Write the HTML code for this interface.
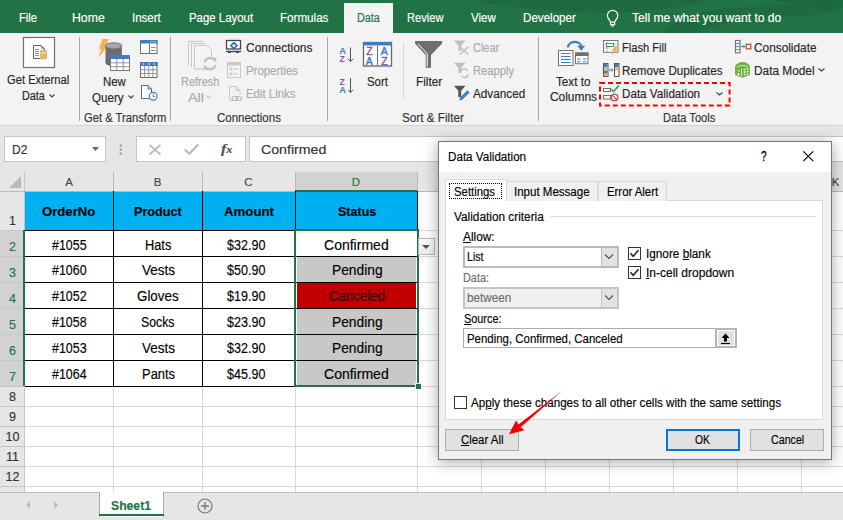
<!DOCTYPE html><html><head><meta charset="utf-8"><style>html,body{margin:0;padding:0;width:843px;height:520px;overflow:hidden;position:relative;background:#f3f3f3;font-family:"Liberation Sans",sans-serif}u{text-decoration:underline;text-underline-offset:1px}div[id^=t]{-webkit-text-stroke:0.15px currentColor}</style></head><body>
<div style="position:absolute;left:0px;top:0px;width:843px;height:33px;background:#217346"></div>
<svg style="position:absolute;left:0;top:0" width="843" height="33"><path d="M470 0 C520 9 575 15 630 12 C660 10 690 5 710 0 Z" fill="#1f6a40"/><path d="M660 33 C675 20 700 9 740 7 C780 5 810 3 843 0 V33 Z" fill="#1f6b41"/><path d="M700 33 C715 24 745 18 790 17 C815 16 830 12 843 8 V33 Z" fill="#217346"/><path d="M775 0 C800 6 825 7 843 5 V0 Z" fill="#1e6840"/></svg>
<div style="position:absolute;left:344px;top:3px;width:49px;height:30px;background:#f3f3f3"></div>
<div id="t0" style="position:absolute;left:19px;top:11.80px;font-family:'Liberation Sans',sans-serif;font-size:12px;line-height:1;font-weight:400;color:#ffffff;white-space:nowrap;transform:scaleX(0.9305);transform-origin:0 0;">File</div>
<div id="t1" style="position:absolute;left:72.4px;top:11.80px;font-family:'Liberation Sans',sans-serif;font-size:12px;line-height:1;font-weight:400;color:#ffffff;white-space:nowrap;transform:scaleX(1.0214);transform-origin:0 0;">Home</div>
<div id="t2" style="position:absolute;left:132.1px;top:11.80px;font-family:'Liberation Sans',sans-serif;font-size:12px;line-height:1;font-weight:400;color:#ffffff;white-space:nowrap;transform:scaleX(0.9595);transform-origin:0 0;">Insert</div>
<div id="t3" style="position:absolute;left:188.5px;top:11.80px;font-family:'Liberation Sans',sans-serif;font-size:12px;line-height:1;font-weight:400;color:#ffffff;white-space:nowrap;transform:scaleX(0.9512);transform-origin:0 0;">Page Layout</div>
<div id="t4" style="position:absolute;left:280.3px;top:11.80px;font-family:'Liberation Sans',sans-serif;font-size:12px;line-height:1;font-weight:400;color:#ffffff;white-space:nowrap;transform:scaleX(0.9677);transform-origin:0 0;">Formulas</div>
<div id="t5" style="position:absolute;left:407.2px;top:11.80px;font-family:'Liberation Sans',sans-serif;font-size:12px;line-height:1;font-weight:400;color:#ffffff;white-space:nowrap;transform:scaleX(0.9299);transform-origin:0 0;">Review</div>
<div id="t6" style="position:absolute;left:471px;top:11.80px;font-family:'Liberation Sans',sans-serif;font-size:12px;line-height:1;font-weight:400;color:#ffffff;white-space:nowrap;transform:scaleX(0.9652);transform-origin:0 0;">View</div>
<div id="t7" style="position:absolute;left:523.2px;top:11.80px;font-family:'Liberation Sans',sans-serif;font-size:12px;line-height:1;font-weight:400;color:#ffffff;white-space:nowrap;transform:scaleX(0.9670);transform-origin:0 0;">Developer</div>
<div id="t8" style="position:absolute;left:632.3px;top:11.80px;font-family:'Liberation Sans',sans-serif;font-size:12px;line-height:1;font-weight:400;color:#ffffff;white-space:nowrap;transform:scaleX(1.0083);transform-origin:0 0;">Tell me what you want to do</div>
<div id="t9" style="position:absolute;left:356.6px;top:11.80px;font-family:'Liberation Sans',sans-serif;font-size:12px;line-height:1;font-weight:400;color:#217346;white-space:nowrap;transform:scaleX(0.8991);transform-origin:0 0;">Data</div>
<svg style="position:absolute;left:605px;top:9px;" width="16" height="19" viewBox="0 0 16 19"><path d="M7.6 1.3 C4.6 1.3 2.4 3.6 2.4 6.4 C2.4 8.8 3.9 10 4.9 11.8 L5.4 13.2 H9.8 L10.3 11.8 C11.3 10 12.8 8.8 12.8 6.4 C12.8 3.6 10.6 1.3 7.6 1.3 Z" fill="none" stroke="#fff" stroke-width="1.2"/><path d="M5.6 13.2 V15.6 H9.6 V13.2" fill="none" stroke="#fff" stroke-width="1.1"/><path d="M6.2 17 H9" stroke="#fff" stroke-width="1.1"/></svg>
<div style="position:absolute;left:0px;top:33px;width:843px;height:92px;background:#f3f3f3"></div>
<div style="position:absolute;left:0px;top:125px;width:843px;height:1px;background:#d5d5d5"></div>
<div style="position:absolute;left:79px;top:37px;width:1px;height:84px;background:#a9a9a9"></div>
<div style="position:absolute;left:170px;top:37px;width:1px;height:84px;background:#a9a9a9"></div>
<div style="position:absolute;left:327px;top:37px;width:1px;height:84px;background:#a9a9a9"></div>
<div style="position:absolute;left:538px;top:37px;width:1px;height:84px;background:#a9a9a9"></div>
<div style="position:absolute;left:403px;top:43px;width:1px;height:55px;background:#d6d6d6"></div>
<svg style="position:absolute;left:0;top:0" width="843" height="126"><rect x="23.5" y="37.5" width="31" height="30" fill="#fff" stroke="#6f6f6f" stroke-width="1.2"/>
<!-- Get External Data -->
<path d="M33.5 45.5 H41 L44.5 49 V58.5 H33.5 Z" fill="#fff" stroke="#5f5f5f"/>
<path d="M41.5 45.8 V48.6 H44.3 Z" fill="#5f5f5f"/>
<path d="M35 49.5 H39 M35 51.5 H39 M35 53.5 H39 M35 55.5 H39" stroke="#8a8a8a"/>
<path d="M40 51 V58.2 C40 60 47 60 47 58.2 V51 Z" fill="#e6b56a"/>
<ellipse cx="43.5" cy="51" rx="3.5" ry="1.3" fill="#e6b56a"/>
<path d="M40.3 52.3 C41 53.4 46 53.4 46.7 52.3" stroke="#fff" stroke-width="0.8" fill="none"/>
<!-- New Query -->
<path d="M102.5 39 H109 L105.5 46 H107.8 L98 58.3 L101.3 49 H98.8 Z" fill="#efb453"/>
<path d="M105.5 46 V63 C105.5 67 121.9 67 121.9 63 V46 Z" fill="#6d6d6d"/>
<ellipse cx="113.7" cy="45.8" rx="8.2" ry="3.1" fill="#a8a8a8" stroke="#6d6d6d" stroke-width="0.8"/>
<rect x="110.5" y="55.5" width="19" height="15" fill="#fff" stroke="#777"/>
<rect x="110" y="55" width="20" height="4" fill="#3f7cc0"/>
<path d="M116.8 59 V70.5 M123.2 59 V70.5 M110.5 62.8 H129.5 M110.5 66.7 H129.5" stroke="#8a8a8a" stroke-width="0.9"/>
<rect x="140.5" y="40.5" width="16.5" height="13" fill="#fff" stroke="#6d6d6d"/>
<rect x="140" y="40" width="17.5" height="3.5" fill="#3f7cc0"/>
<path d="M150.5 41.8 H151.5 M152.8 41.8 H153.8 M155 41.8 H156" stroke="#fff" stroke-width="1"/>
<path d="M149.5 43.5 V53.5" stroke="#6d6d6d"/>
<path d="M151 47.5 H155.5 M151 50.5 H155.5" stroke="#888"/>
<rect x="140.5" y="62.5" width="16.5" height="15" fill="#fff" stroke="#6d6d6d"/>
<rect x="140" y="62" width="17.5" height="4" fill="#3f7cc0"/>
<path d="M142.5 64 H144 M147.8 64 H149.8 M153.5 64 H155" stroke="#fff" stroke-width="1"/>
<path d="M144.7 66 V77.5 M148.8 66 V77.5 M152.9 66 V77.5 M140.5 69.8 H157 M140.5 73.6 H157" stroke="#8a8a8a" stroke-width="0.9"/>
<path d="M141.5 85.5 H148 L151.5 89 V98.5 H141.5 Z" fill="#fff" stroke="#666"/>
<path d="M148 85.5 V89 H151.5" fill="none" stroke="#666"/>
<circle cx="153.2" cy="96.2" r="3.9" fill="#fff" stroke="#3d7ec7" stroke-width="1.2"/>
<path d="M153.2 93.8 V96.6 H155.3" fill="none" stroke="#3d7ec7" stroke-width="1"/>
<!-- Refresh All -->
<path d="M188.5 65 V41.5 H203" fill="none" stroke="#c8c8c8"/>
<path d="M191.5 67 V43.5 H205.5" fill="none" stroke="#c8c8c8"/>
<path d="M194.5 45.5 H207 L211.5 50 V69 H194.5 Z" fill="#f5f2f5" stroke="#c8c8c8"/>
<circle cx="210" cy="63.6" r="7.5" fill="#f3f3f3"/>
<path d="M204.6 62.3 A5.6 5.6 0 0 1 214.6 60.2" fill="none" stroke="#c2c2c2" stroke-width="2.3"/>
<path d="M212 57.5 L216.8 58 L215.5 62.5 Z" fill="#c2c2c2"/>
<path d="M215.4 65 A5.6 5.6 0 0 1 205.4 67" fill="none" stroke="#c2c2c2" stroke-width="2.3"/>
<path d="M208 69.8 L203.2 69.3 L204.5 64.8 Z" fill="#c2c2c2"/>
<!-- Connections -->
<rect x="226.5" y="40.5" width="14" height="8.5" fill="#fff" stroke="#444" stroke-width="1.3"/>
<path d="M225.8 51.5 H241.2" stroke="#444" stroke-width="1.3"/>
<path d="M228 52.5 H231 M236 52.5 H239" stroke="#444" stroke-width="1"/>
<path d="M233.9 42.6 L236.9 45.6 L233.9 48.6 L230.9 45.6 Z" fill="#fff" stroke="#2f6fbf" stroke-width="1.7"/>
<!-- Properties -->
<rect x="227.5" y="62.5" width="13" height="15" fill="#f5f2f5" stroke="#c8c8c8"/>
<rect x="227.5" y="62.5" width="13" height="3" fill="#c8c8c8"/>
<circle cx="231" cy="69" r="1.1" fill="none" stroke="#c2c2c2"/>
<circle cx="231" cy="74" r="1.1" fill="none" stroke="#c2c2c2"/>
<path d="M233.5 69 H238 M233.5 74 H238" stroke="#c2c2c2"/>
<!-- Edit Links -->
<path d="M229.5 86.5 H236 L240 90.5 V95 M233 100.5 H229.5 V86.5" fill="#f5f2f5" stroke="#c8c8c8"/>
<path d="M236 86.5 V90.5 H240" fill="none" stroke="#c8c8c8"/>
<rect x="232" y="96.5" width="5.5" height="4" rx="2" fill="none" stroke="#bdbdbd" stroke-width="1.2"/>
<rect x="236" y="96.5" width="5.5" height="4" rx="2" fill="none" stroke="#bdbdbd" stroke-width="1.2"/>
<!-- AZ ZA -->
<text x="339.3" y="53.9" font-family="Liberation Sans" font-size="9.3" font-weight="bold" fill="#3d7ec7">A</text>
<text x="339.6" y="61.9" font-family="Liberation Sans" font-size="8.6" font-weight="bold" fill="#8f4fc0">Z</text>
<path d="M350.5 47.5 V61.3 M348 58.8 L350.5 61.5 L353 58.8" fill="none" stroke="#555" stroke-width="1"/>
<text x="339.6" y="84.7" font-family="Liberation Sans" font-size="8.6" font-weight="bold" fill="#8f4fc0">Z</text>
<text x="339.3" y="93.3" font-family="Liberation Sans" font-size="9.3" font-weight="bold" fill="#3d7ec7">A</text>
<path d="M350.5 78 V92.3 M348 89.8 L350.5 92.5 L353 89.8" fill="none" stroke="#555" stroke-width="1"/>
<!-- Sort -->
<rect x="363.5" y="42.5" width="28" height="23.5" fill="#fff" stroke="#666" stroke-width="1.3"/>
<rect x="363" y="42" width="29" height="3.5" fill="#3f7cc0"/>
<path d="M377.5 45.5 V66" stroke="#6d6d6d"/>
<text x="366.2" y="54.6" font-family="Liberation Sans" font-size="10.5" fill="#8f4fc0" stroke="#8f4fc0" stroke-width="0.45">Z</text>
<text x="365.8" y="65" font-family="Liberation Sans" font-size="10.5" fill="#3d7ec7" stroke="#3d7ec7" stroke-width="0.45">A</text>
<text x="380.8" y="54.6" font-family="Liberation Sans" font-size="10.5" fill="#3d7ec7" stroke="#3d7ec7" stroke-width="0.45">A</text>
<text x="381.2" y="65" font-family="Liberation Sans" font-size="10.5" fill="#8f4fc0" stroke="#8f4fc0" stroke-width="0.45">Z</text>
<!-- Filter -->
<path d="M415 41 H442.1 V43.6 L431 55 V67.8 H425.7 V55 L415 43.6 Z" fill="#6e6e6e"/>
<path d="M418 43.8 L427.2 53.8 V66.5" fill="none" stroke="#fff" stroke-width="1"/>
<path d="M454 40.5 H465.5 L461.2 45.5 V50.8 H458.3 V45.5 Z" fill="#bfbfbf"/>
<path d="M459.8 46.8 L468.3 54.5 M468.3 46.8 L459.8 54.5" stroke="#bdbdbd" stroke-width="1.3"/>
<path d="M454 62.8 H465.5 L461.2 67.8 V73 H458.3 V67.8 Z" fill="#bfbfbf"/>
<path d="M460.7 72 A3.8 3.8 0 0 1 467.8 71 M468.3 74.3 A3.8 3.8 0 0 1 461.2 75.5" fill="none" stroke="#bdbdbd" stroke-width="1.3"/>
<path d="M454 85.7 H465.5 L461.2 90.7 V97 H458.3 V90.7 Z" fill="#555"/>
<path d="M459.2 100.8 L460.3 97.2 L467.3 90.2 L469.6 92.5 L462.6 99.5 Z" fill="#3d7ec7"/>
<!-- Text to Columns -->
<rect x="558.5" y="50.5" width="14.5" height="15" fill="#fff" stroke="#707070"/>
<path d="M561 53.5 H570.5 M561 56.5 H570.5 M561 59.5 H570.5 M561 62.5 H570.5" stroke="#3d7ec7"/>
<rect x="575.5" y="53" width="12.5" height="10.7" fill="#fff" stroke="#707070"/>
<rect x="575" y="52.5" width="13.5" height="3.5" fill="#707070"/>
<path d="M577 59 H580.5 M583 59 H586.5 M577 61.8 H580.5 M583 61.8 H586.5" stroke="#3d7ec7"/>
<path d="M568 47.5 C568.5 40.5 580 40 581.2 46.5" fill="none" stroke="#3d7ec7" stroke-width="2.2"/>
<path d="M577.3 45.8 L581.3 50.8 L585.2 45.8 Z" fill="#3d7ec7"/>
<!-- Flash Fill -->
<rect x="603.5" y="40.5" width="14.5" height="11.8" fill="#fff" stroke="#777"/>
<path d="M603.5 44 H618 M603.5 48 H610 M607 40.5 V52.3" stroke="#aaa" stroke-width="0.8"/>
<rect x="606.5" y="43.5" width="7" height="3" fill="#fff" stroke="#3a9a8a"/>
<path d="M614.8 46 L611.5 51 H613.8 L611.5 55.8 L618.8 49.3 H616.2 L618.5 46 Z" fill="#efb453"/>
<!-- Remove Duplicates -->
<rect x="603.5" y="63.5" width="4.5" height="13" fill="#fff" stroke="#555"/>
<rect x="604" y="64" width="3.5" height="3" fill="#3d7ec7"/>
<rect x="604" y="67.3" width="3.5" height="3" fill="#efb453"/>
<rect x="604" y="70.6" width="3.5" height="3" fill="#3d7ec7"/>
<rect x="604" y="73.6" width="3.5" height="2.6" fill="#efb453"/>
<rect x="614.5" y="63.5" width="4.5" height="13" fill="#fff" stroke="#555"/>
<rect x="615" y="64" width="3.5" height="3" fill="#3d7ec7"/>
<rect x="615" y="67.3" width="3.5" height="3" fill="#efb453"/>
<path d="M609 70 H612.8 M611.3 68.5 L612.8 70 L611.3 71.5" fill="none" stroke="#3d7ec7"/>
<!-- Data Validation -->
<rect x="603.5" y="88.5" width="7" height="3" fill="#fff" stroke="#707070"/>
<rect x="603.5" y="95.5" width="7" height="3.5" fill="#fff" stroke="#707070"/>
<path d="M611.3 89.3 L613.6 91.6 L618.8 85.5" fill="none" stroke="#2a9d6a" stroke-width="1.6"/>
<circle cx="614.5" cy="97.4" r="3.3" fill="#fff" stroke="#d04a3a" stroke-width="1.3"/>
<path d="M612.2 95.1 L616.8 99.7" stroke="#d04a3a" stroke-width="1.3"/>
<!-- Consolidate -->
<rect x="735.5" y="40.5" width="4.5" height="12.3" fill="#fff" stroke="#777" stroke-width="1.2"/>
<path d="M735.5 43.6 H740 M735.5 46.6 H740 M735.5 49.7 H740" stroke="#777"/>
<path d="M741 46.6 H744.8 M743.3 45 L744.9 46.6 L743.3 48.2" fill="none" stroke="#3d7ec7"/>
<rect x="746.3" y="44.3" width="4.5" height="4.5" fill="#fff" stroke="#d04a3a" stroke-width="1.3"/>
<!-- Data Model -->
<path d="M735 67 C735.5 63.5 740 62 742.5 62 C745 62 749.5 63.5 749.9 67 V75 L742.5 77.8 L735 75 Z" fill="#6ab43e"/>
<path d="M737 67.2 C739 65 746 65 748 67.2" stroke="#e9f5e0" stroke-width="0.9" fill="none"/>
<path d="M741.5 68.5 V76.5" stroke="#e9f5e0" stroke-width="0.9"/>
<path d="M743.8 69.5 H745.5 M746.8 69 H748.3 M743.8 72 H745.5 M746.8 71.7 H748.3 M743.8 74.5 H745.5 M746.8 74.2 H748.3" stroke="#fff" stroke-width="1.3"/>
<path d="M737.5 70 L739.5 71.5 M738.5 73 V75.5 M737.3 74.2 H739.7" stroke="#fff" stroke-width="1"/>
</svg>
<div id="t10" style="position:absolute;left:83.7px;top:111.80px;font-family:'Liberation Sans',sans-serif;font-size:12px;line-height:1;font-weight:400;color:#333;white-space:nowrap;transform:scaleX(0.9349);transform-origin:0 0;">Get &amp; Transform</div>
<div id="t11" style="position:absolute;left:216.5px;top:111.80px;font-family:'Liberation Sans',sans-serif;font-size:12px;line-height:1;font-weight:400;color:#333;white-space:nowrap;transform:scaleX(0.9578);transform-origin:0 0;">Connections</div>
<div id="t12" style="position:absolute;left:402px;top:111.80px;font-family:'Liberation Sans',sans-serif;font-size:12px;line-height:1;font-weight:400;color:#333;white-space:nowrap;transform:scaleX(0.9770);transform-origin:0 0;">Sort &amp; Filter</div>
<div id="t13" style="position:absolute;left:663px;top:111.80px;font-family:'Liberation Sans',sans-serif;font-size:12px;line-height:1;font-weight:400;color:#333;white-space:nowrap;transform:scaleX(0.9259);transform-origin:0 0;">Data Tools</div>
<div id="t14" style="position:absolute;left:7.4px;top:73.80px;font-family:'Liberation Sans',sans-serif;font-size:12px;line-height:1;font-weight:400;color:#262626;white-space:nowrap;transform:scaleX(0.9325);transform-origin:0 0;">Get External</div>
<div id="t15" style="position:absolute;left:21.5px;top:89.50px;font-family:'Liberation Sans',sans-serif;font-size:12px;line-height:1;font-weight:400;color:#262626;white-space:nowrap;transform:scaleX(0.9030);transform-origin:0 0;">Data</div>
<svg style="position:absolute;left:49px;top:94px;" width="6" height="4" viewBox="0 0 6 4"><path d="M0.5 0.5 L3 3 L5.5 0.5" fill="none" stroke="#444" stroke-width="1.2"/></svg>
<div id="t16" style="position:absolute;left:102.9px;top:75.60px;font-family:'Liberation Sans',sans-serif;font-size:12px;line-height:1;font-weight:400;color:#262626;white-space:nowrap;transform:scaleX(0.9494);transform-origin:0 0;">New</div>
<div id="t17" style="position:absolute;left:92.4px;top:91.50px;font-family:'Liberation Sans',sans-serif;font-size:12px;line-height:1;font-weight:400;color:#262626;white-space:nowrap;transform:scaleX(0.9667);transform-origin:0 0;">Query</div>
<svg style="position:absolute;left:128px;top:95px;" width="6" height="4" viewBox="0 0 6 4"><path d="M0.5 0.5 L3 3 L5.5 0.5" fill="none" stroke="#444" stroke-width="1.2"/></svg>
<div id="t18" style="position:absolute;left:181.4px;top:75.80px;font-family:'Liberation Sans',sans-serif;font-size:12px;line-height:1;font-weight:400;color:#a9a9a9;white-space:nowrap;transform:scaleX(0.9112);transform-origin:0 0;">Refresh</div>
<div id="t19" style="position:absolute;left:188px;top:91.50px;font-family:'Liberation Sans',sans-serif;font-size:12px;line-height:1;font-weight:400;color:#a9a9a9;white-space:nowrap;transform:scaleX(1.1991);transform-origin:0 0;">All</div>
<svg style="position:absolute;left:206px;top:95px;" width="6" height="4" viewBox="0 0 6 4"><path d="M0.5 0.5 L3 3 L5.5 0.5" fill="none" stroke="#b4b4b4" stroke-width="1"/></svg>
<div id="t20" style="position:absolute;left:245.5px;top:42.00px;font-family:'Liberation Sans',sans-serif;font-size:12px;line-height:1;font-weight:400;color:#262626;white-space:nowrap;transform:scaleX(0.9967);transform-origin:0 0;">Connections</div>
<div id="t21" style="position:absolute;left:245.5px;top:65.00px;font-family:'Liberation Sans',sans-serif;font-size:12px;line-height:1;font-weight:400;color:#a9a9a9;white-space:nowrap;transform:scaleX(0.9506);transform-origin:0 0;">Properties</div>
<div id="t22" style="position:absolute;left:245.5px;top:87.80px;font-family:'Liberation Sans',sans-serif;font-size:12px;line-height:1;font-weight:400;color:#a9a9a9;white-space:nowrap;transform:scaleX(0.9494);transform-origin:0 0;">Edit Links</div>
<div id="t23" style="position:absolute;left:366.8px;top:75.90px;font-family:'Liberation Sans',sans-serif;font-size:12px;line-height:1;font-weight:400;color:#262626;white-space:nowrap;transform:scaleX(0.9493);transform-origin:0 0;">Sort</div>
<div id="t24" style="position:absolute;left:415.9px;top:75.90px;font-family:'Liberation Sans',sans-serif;font-size:12px;line-height:1;font-weight:400;color:#262626;white-space:nowrap;transform:scaleX(0.9786);transform-origin:0 0;">Filter</div>
<div id="t25" style="position:absolute;left:472.5px;top:42.00px;font-family:'Liberation Sans',sans-serif;font-size:12px;line-height:1;font-weight:400;color:#a9a9a9;white-space:nowrap;transform:scaleX(0.9098);transform-origin:0 0;">Clear</div>
<div id="t26" style="position:absolute;left:472.5px;top:65.00px;font-family:'Liberation Sans',sans-serif;font-size:12px;line-height:1;font-weight:400;color:#a9a9a9;white-space:nowrap;transform:scaleX(0.9312);transform-origin:0 0;">Reapply</div>
<div id="t27" style="position:absolute;left:472.5px;top:87.80px;font-family:'Liberation Sans',sans-serif;font-size:12px;line-height:1;font-weight:400;color:#262626;white-space:nowrap;transform:scaleX(0.9780);transform-origin:0 0;">Advanced</div>
<div id="t28" style="position:absolute;left:556.4px;top:75.55px;font-family:'Liberation Sans',sans-serif;font-size:12px;line-height:1;font-weight:400;color:#262626;white-space:nowrap;transform:scaleX(0.9729);transform-origin:0 0;">Text to</div>
<div id="t29" style="position:absolute;left:549.7px;top:91.00px;font-family:'Liberation Sans',sans-serif;font-size:12px;line-height:1;font-weight:400;color:#262626;white-space:nowrap;transform:scaleX(0.9924);transform-origin:0 0;">Columns</div>
<div id="t30" style="position:absolute;left:622.3px;top:42.00px;font-family:'Liberation Sans',sans-serif;font-size:12px;line-height:1;font-weight:400;color:#262626;white-space:nowrap;transform:scaleX(0.9247);transform-origin:0 0;">Flash Fill</div>
<div id="t31" style="position:absolute;left:622.3px;top:65.00px;font-family:'Liberation Sans',sans-serif;font-size:12px;line-height:1;font-weight:400;color:#262626;white-space:nowrap;transform:scaleX(0.9669);transform-origin:0 0;">Remove Duplicates</div>
<div id="t32" style="position:absolute;left:622.3px;top:87.80px;font-family:'Liberation Sans',sans-serif;font-size:12px;line-height:1;font-weight:400;color:#262626;white-space:nowrap;transform:scaleX(0.9702);transform-origin:0 0;">Data Validation</div>
<svg style="position:absolute;left:716px;top:92px;" width="7" height="4" viewBox="0 0 7 4"><path d="M0.5 0.5 L3.5 3 L6.5 0.5" fill="none" stroke="#444" stroke-width="1.2"/></svg>
<svg style="position:absolute;left:598px;top:82px" width="135" height="26"><rect x="2" y="1" width="129.6" height="22.6" fill="none" stroke="#fa0000" stroke-width="2" stroke-dasharray="5 3"/></svg>
<div id="t33" style="position:absolute;left:754.4px;top:42.00px;font-family:'Liberation Sans',sans-serif;font-size:12px;line-height:1;font-weight:400;color:#262626;white-space:nowrap;transform:scaleX(0.9862);transform-origin:0 0;">Consolidate</div>
<div id="t34" style="position:absolute;left:754.4px;top:65.00px;font-family:'Liberation Sans',sans-serif;font-size:12px;line-height:1;font-weight:400;color:#262626;white-space:nowrap;transform:scaleX(0.9874);transform-origin:0 0;">Data Model</div>
<svg style="position:absolute;left:818px;top:68px;" width="7" height="4" viewBox="0 0 7 4"><path d="M0.5 0.5 L3.5 3 L6.5 0.5" fill="none" stroke="#444" stroke-width="1.2"/></svg>
<div style="position:absolute;left:0px;top:126px;width:843px;height:46px;background:#e6e6e6"></div>
<div style="position:absolute;left:4px;top:136px;width:102px;height:26px;background:#fff;border:1px solid #c6c6c6;box-sizing:border-box"></div>
<div id="t35" style="position:absolute;left:11.5px;top:143.88px;font-family:'Liberation Sans',sans-serif;font-size:12.5px;line-height:1;font-weight:400;color:#333;white-space:nowrap;transform:scaleX(0.9634);transform-origin:0 0;">D2</div>
<svg style="position:absolute;left:92px;top:147px;" width="8" height="5" viewBox="0 0 8 5"><path d="M0 0 H7 L3.5 4 Z" fill="#666"/></svg>
<svg style="position:absolute;left:119px;top:144px;" width="4" height="12" viewBox="0 0 4 12"><rect x="0.7" y="0.5" width="2.2" height="2.2" fill="#a0a0a0"/><rect x="0.7" y="4.5" width="2.2" height="2.2" fill="#a0a0a0"/><rect x="0.7" y="8.5" width="2.2" height="2.2" fill="#a0a0a0"/></svg>
<div style="position:absolute;left:136px;top:136px;width:110px;height:26px;background:#fff;border:1px solid #c6c6c6;box-sizing:border-box"></div>
<svg style="position:absolute;left:148px;top:143px;" width="14" height="13" viewBox="0 0 14 13"><path d="M1.5 1.8 L12.5 11.5 M12.5 1.8 L1.5 11.5" stroke="#b8b8b8" stroke-width="1.7"/></svg>
<svg style="position:absolute;left:183px;top:143px;" width="17" height="13" viewBox="0 0 17 13"><path d="M1.8 6.5 L6.3 10.8 L15.3 1.5" fill="none" stroke="#b8b8b8" stroke-width="2"/></svg>
<div id="t36" style="position:absolute;left:221.4px;top:141.95px;font-family:'Liberation Serif',sans-serif;font-size:13px;line-height:1;font-weight:700;color:#505050;white-space:nowrap;transform:scaleX(1.2201);transform-origin:0 0;"><i>f</i><span style="font-size:10px"><i>x</i></span></div>
<div style="position:absolute;left:249px;top:136px;width:610px;height:26px;background:#fff;border:1px solid #c6c6c6;box-sizing:border-box"></div>
<div id="t37" style="position:absolute;left:261.1px;top:143.88px;font-family:'Liberation Sans',sans-serif;font-size:12.5px;line-height:1;font-weight:400;color:#333;white-space:nowrap;transform:scaleX(1.1323);transform-origin:0 0;">Confirmed</div>
<div style="position:absolute;left:25px;top:191px;width:818px;height:301px;background:#fff"></div>
<div style="position:absolute;left:0px;top:172px;width:25px;height:320px;background:#e6e6e6"></div>
<div style="position:absolute;left:0px;top:230px;width:24px;height:156px;background:#d2d2d2"></div>
<div style="position:absolute;left:25px;top:172px;width:818px;height:19px;background:#e6e6e6"></div>
<div style="position:absolute;left:295px;top:172px;width:122px;height:19px;background:#d2d2d2"></div>
<div style="position:absolute;left:113px;top:172px;width:1px;height:19px;background:#b9b9b9"></div>
<div style="position:absolute;left:202px;top:172px;width:1px;height:19px;background:#b9b9b9"></div>
<div style="position:absolute;left:295px;top:172px;width:1px;height:19px;background:#b9b9b9"></div>
<div style="position:absolute;left:417px;top:172px;width:1px;height:19px;background:#b9b9b9"></div>
<div style="position:absolute;left:481px;top:172px;width:1px;height:19px;background:#b9b9b9"></div>
<div style="position:absolute;left:545px;top:172px;width:1px;height:19px;background:#b9b9b9"></div>
<div style="position:absolute;left:609px;top:172px;width:1px;height:19px;background:#b9b9b9"></div>
<div style="position:absolute;left:673px;top:172px;width:1px;height:19px;background:#b9b9b9"></div>
<div style="position:absolute;left:737px;top:172px;width:1px;height:19px;background:#b9b9b9"></div>
<div style="position:absolute;left:801px;top:172px;width:1px;height:19px;background:#b9b9b9"></div>
<div style="position:absolute;left:24px;top:172px;width:1px;height:320px;background:#c6c6c6"></div>
<div style="position:absolute;left:0px;top:191px;width:843px;height:1px;background:#b9b9b9"></div>
<div style="position:absolute;left:295px;top:190px;width:122px;height:2px;background:#217346"></div>
<div style="position:absolute;left:0px;top:230px;width:24px;height:1px;background:#c6c6c6"></div>
<div style="position:absolute;left:0px;top:256px;width:24px;height:1px;background:#c6c6c6"></div>
<div style="position:absolute;left:0px;top:282px;width:24px;height:1px;background:#c6c6c6"></div>
<div style="position:absolute;left:0px;top:308px;width:24px;height:1px;background:#c6c6c6"></div>
<div style="position:absolute;left:0px;top:334px;width:24px;height:1px;background:#c6c6c6"></div>
<div style="position:absolute;left:0px;top:360px;width:24px;height:1px;background:#c6c6c6"></div>
<div style="position:absolute;left:0px;top:386px;width:24px;height:1px;background:#c6c6c6"></div>
<div style="position:absolute;left:0px;top:406px;width:24px;height:1px;background:#c6c6c6"></div>
<div style="position:absolute;left:0px;top:426px;width:24px;height:1px;background:#c6c6c6"></div>
<div style="position:absolute;left:0px;top:446px;width:24px;height:1px;background:#c6c6c6"></div>
<div style="position:absolute;left:0px;top:466px;width:24px;height:1px;background:#c6c6c6"></div>
<div style="position:absolute;left:0px;top:486px;width:24px;height:1px;background:#c6c6c6"></div>
<div style="position:absolute;left:23px;top:230px;width:2px;height:156px;background:#217346"></div>
<svg style="position:absolute;left:9px;top:176px;" width="13" height="13" viewBox="0 0 13 13"><path d="M12 0 V12 H0 Z" fill="#b9b9b9"/></svg>
<div style="position:absolute;left:417px;top:191px;width:1px;height:301px;background:#d9d9d9"></div>
<div style="position:absolute;left:481px;top:191px;width:1px;height:301px;background:#d9d9d9"></div>
<div style="position:absolute;left:545px;top:191px;width:1px;height:301px;background:#d9d9d9"></div>
<div style="position:absolute;left:609px;top:191px;width:1px;height:301px;background:#d9d9d9"></div>
<div style="position:absolute;left:673px;top:191px;width:1px;height:301px;background:#d9d9d9"></div>
<div style="position:absolute;left:737px;top:191px;width:1px;height:301px;background:#d9d9d9"></div>
<div style="position:absolute;left:801px;top:191px;width:1px;height:301px;background:#d9d9d9"></div>
<div style="position:absolute;left:113px;top:386px;width:1px;height:106px;background:#d9d9d9"></div>
<div style="position:absolute;left:202px;top:386px;width:1px;height:106px;background:#d9d9d9"></div>
<div style="position:absolute;left:295px;top:386px;width:1px;height:106px;background:#d9d9d9"></div>
<div style="position:absolute;left:25px;top:386px;width:818px;height:1px;background:#d9d9d9"></div>
<div style="position:absolute;left:25px;top:406px;width:818px;height:1px;background:#d9d9d9"></div>
<div style="position:absolute;left:25px;top:426px;width:818px;height:1px;background:#d9d9d9"></div>
<div style="position:absolute;left:25px;top:446px;width:818px;height:1px;background:#d9d9d9"></div>
<div style="position:absolute;left:25px;top:466px;width:818px;height:1px;background:#d9d9d9"></div>
<div style="position:absolute;left:25px;top:486px;width:818px;height:1px;background:#d9d9d9"></div>
<div style="position:absolute;left:417px;top:230px;width:426px;height:1px;background:#d9d9d9"></div>
<div style="position:absolute;left:417px;top:256px;width:426px;height:1px;background:#d9d9d9"></div>
<div style="position:absolute;left:417px;top:282px;width:426px;height:1px;background:#d9d9d9"></div>
<div style="position:absolute;left:417px;top:308px;width:426px;height:1px;background:#d9d9d9"></div>
<div style="position:absolute;left:417px;top:334px;width:426px;height:1px;background:#d9d9d9"></div>
<div style="position:absolute;left:417px;top:360px;width:426px;height:1px;background:#d9d9d9"></div>
<div style="position:absolute;left:25px;top:192px;width:392px;height:38px;background:#00b0f0"></div>
<div style="position:absolute;left:297px;top:257px;width:119px;height:25px;background:#c8c8c8"></div>
<div style="position:absolute;left:297px;top:283px;width:119px;height:25px;background:#c00000"></div>
<div style="position:absolute;left:297px;top:309px;width:119px;height:25px;background:#c8c8c8"></div>
<div style="position:absolute;left:297px;top:335px;width:119px;height:25px;background:#c8c8c8"></div>
<div style="position:absolute;left:297px;top:361px;width:119px;height:25px;background:#c8c8c8"></div>
<div style="position:absolute;left:113px;top:191px;width:1px;height:195px;background:#000"></div>
<div style="position:absolute;left:202px;top:191px;width:1px;height:195px;background:#000"></div>
<div style="position:absolute;left:295px;top:191px;width:1px;height:195px;background:#000"></div>
<div style="position:absolute;left:417px;top:191px;width:1px;height:195px;background:#000"></div>
<div style="position:absolute;left:25px;top:230px;width:392px;height:1px;background:#000"></div>
<div style="position:absolute;left:25px;top:256px;width:392px;height:1px;background:#000"></div>
<div style="position:absolute;left:25px;top:282px;width:392px;height:1px;background:#000"></div>
<div style="position:absolute;left:25px;top:308px;width:392px;height:1px;background:#000"></div>
<div style="position:absolute;left:25px;top:334px;width:392px;height:1px;background:#000"></div>
<div style="position:absolute;left:25px;top:360px;width:392px;height:1px;background:#000"></div>
<div style="position:absolute;left:25px;top:386px;width:392px;height:1px;background:#000"></div>
<div style="position:absolute;left:294px;top:229px;width:125px;height:158px;border:2px solid #217346;box-sizing:border-box"></div>
<div style="position:absolute;left:415px;top:383px;width:5px;height:5px;background:#217346;border:1px solid #fff"></div>
<div style="position:absolute;left:418px;top:238px;width:17px;height:17px;background:linear-gradient(#fafafa,#ececec);border:1px solid #b4b8bd;box-sizing:border-box"></div>
<svg style="position:absolute;left:422px;top:245px;" width="9" height="5" viewBox="0 0 9 5"><path d="M0 0 H8 L4 4 Z" fill="#555"/></svg>
<div id="t38" style="position:absolute;left:69.0px;top:176.72px;font-family:'Liberation Sans',sans-serif;font-size:11.5px;line-height:1;font-weight:400;color:#444;white-space:nowrap;transform:translateX(-50%)">A</div>
<div id="t39" style="position:absolute;left:157.5px;top:176.72px;font-family:'Liberation Sans',sans-serif;font-size:11.5px;line-height:1;font-weight:400;color:#444;white-space:nowrap;transform:translateX(-50%)">B</div>
<div id="t40" style="position:absolute;left:248.5px;top:176.72px;font-family:'Liberation Sans',sans-serif;font-size:11.5px;line-height:1;font-weight:400;color:#444;white-space:nowrap;transform:translateX(-50%)">C</div>
<div id="t41" style="position:absolute;left:356.0px;top:176.72px;font-family:'Liberation Sans',sans-serif;font-size:11.5px;line-height:1;font-weight:400;color:#217346;white-space:nowrap;transform:translateX(-50%)">D</div>
<div id="t42" style="position:absolute;left:449.0px;top:176.72px;font-family:'Liberation Sans',sans-serif;font-size:11.5px;line-height:1;font-weight:400;color:#444;white-space:nowrap;transform:translateX(-50%)">E</div>
<div id="t43" style="position:absolute;left:513.0px;top:176.72px;font-family:'Liberation Sans',sans-serif;font-size:11.5px;line-height:1;font-weight:400;color:#444;white-space:nowrap;transform:translateX(-50%)">F</div>
<div id="t44" style="position:absolute;left:577.0px;top:176.72px;font-family:'Liberation Sans',sans-serif;font-size:11.5px;line-height:1;font-weight:400;color:#444;white-space:nowrap;transform:translateX(-50%)">G</div>
<div id="t45" style="position:absolute;left:641.0px;top:176.72px;font-family:'Liberation Sans',sans-serif;font-size:11.5px;line-height:1;font-weight:400;color:#444;white-space:nowrap;transform:translateX(-50%)">H</div>
<div id="t46" style="position:absolute;left:705.0px;top:176.72px;font-family:'Liberation Sans',sans-serif;font-size:11.5px;line-height:1;font-weight:400;color:#444;white-space:nowrap;transform:translateX(-50%)">I</div>
<div id="t47" style="position:absolute;left:769.0px;top:176.72px;font-family:'Liberation Sans',sans-serif;font-size:11.5px;line-height:1;font-weight:400;color:#444;white-space:nowrap;transform:translateX(-50%)">J</div>
<div id="t48" style="position:absolute;left:835.5px;top:176.72px;font-family:'Liberation Sans',sans-serif;font-size:11.5px;line-height:1;font-weight:400;color:#444;white-space:nowrap;transform:translateX(-50%)">K</div>
<div id="t49" style="position:absolute;left:12.5px;top:215.38px;font-family:'Liberation Sans',sans-serif;font-size:12.5px;line-height:1;font-weight:400;color:#333;white-space:nowrap;transform:translateX(-50%)">1</div>
<div id="t50" style="position:absolute;left:12.5px;top:241.38px;font-family:'Liberation Sans',sans-serif;font-size:12.5px;line-height:1;font-weight:400;color:#217346;white-space:nowrap;transform:translateX(-50%)">2</div>
<div id="t51" style="position:absolute;left:12.5px;top:267.38px;font-family:'Liberation Sans',sans-serif;font-size:12.5px;line-height:1;font-weight:400;color:#217346;white-space:nowrap;transform:translateX(-50%)">3</div>
<div id="t52" style="position:absolute;left:12.5px;top:293.38px;font-family:'Liberation Sans',sans-serif;font-size:12.5px;line-height:1;font-weight:400;color:#217346;white-space:nowrap;transform:translateX(-50%)">4</div>
<div id="t53" style="position:absolute;left:12.5px;top:319.38px;font-family:'Liberation Sans',sans-serif;font-size:12.5px;line-height:1;font-weight:400;color:#217346;white-space:nowrap;transform:translateX(-50%)">5</div>
<div id="t54" style="position:absolute;left:12.5px;top:345.38px;font-family:'Liberation Sans',sans-serif;font-size:12.5px;line-height:1;font-weight:400;color:#217346;white-space:nowrap;transform:translateX(-50%)">6</div>
<div id="t55" style="position:absolute;left:12.5px;top:371.38px;font-family:'Liberation Sans',sans-serif;font-size:12.5px;line-height:1;font-weight:400;color:#217346;white-space:nowrap;transform:translateX(-50%)">7</div>
<div id="t56" style="position:absolute;left:12.5px;top:391.38px;font-family:'Liberation Sans',sans-serif;font-size:12.5px;line-height:1;font-weight:400;color:#333;white-space:nowrap;transform:translateX(-50%)">8</div>
<div id="t57" style="position:absolute;left:12.5px;top:411.38px;font-family:'Liberation Sans',sans-serif;font-size:12.5px;line-height:1;font-weight:400;color:#333;white-space:nowrap;transform:translateX(-50%)">9</div>
<div id="t58" style="position:absolute;left:12.5px;top:431.38px;font-family:'Liberation Sans',sans-serif;font-size:12.5px;line-height:1;font-weight:400;color:#333;white-space:nowrap;transform:translateX(-50%)">10</div>
<div id="t59" style="position:absolute;left:12.5px;top:451.38px;font-family:'Liberation Sans',sans-serif;font-size:12.5px;line-height:1;font-weight:400;color:#333;white-space:nowrap;transform:translateX(-50%)">11</div>
<div id="t60" style="position:absolute;left:12.5px;top:471.38px;font-family:'Liberation Sans',sans-serif;font-size:12.5px;line-height:1;font-weight:400;color:#333;white-space:nowrap;transform:translateX(-50%)">12</div>
<div id="t61" style="position:absolute;left:42.3px;top:204.83px;font-family:'Liberation Sans',sans-serif;font-size:13.5px;line-height:1;font-weight:700;color:#000;white-space:nowrap;transform:scaleX(0.9732);transform-origin:0 0;">OrderNo</div>
<div id="t62" style="position:absolute;left:134.3px;top:204.83px;font-family:'Liberation Sans',sans-serif;font-size:13.5px;line-height:1;font-weight:700;color:#000;white-space:nowrap;transform:scaleX(0.9330);transform-origin:0 0;">Product</div>
<div id="t63" style="position:absolute;left:224.2px;top:204.83px;font-family:'Liberation Sans',sans-serif;font-size:13.5px;line-height:1;font-weight:700;color:#000;white-space:nowrap;transform:scaleX(0.9804);transform-origin:0 0;">Amount</div>
<div id="t64" style="position:absolute;left:337.9px;top:204.83px;font-family:'Liberation Sans',sans-serif;font-size:13.5px;line-height:1;font-weight:700;color:#000;white-space:nowrap;transform:scaleX(0.9281);transform-origin:0 0;">Status</div>
<div id="t65" style="position:absolute;left:52.3px;top:237.90px;font-family:'Liberation Sans',sans-serif;font-size:14px;line-height:1;font-weight:400;color:#000;white-space:nowrap;transform:scaleX(0.8886);transform-origin:0 0;">#1055</div>
<div id="t66" style="position:absolute;left:145.04999999999998px;top:237.90px;font-family:'Liberation Sans',sans-serif;font-size:14px;line-height:1;font-weight:400;color:#000;white-space:nowrap;transform:scaleX(0.9133);transform-origin:0 0;">Hats</div>
<div id="t67" style="position:absolute;left:227.4px;top:237.90px;font-family:'Liberation Sans',sans-serif;font-size:14px;line-height:1;font-weight:400;color:#000;white-space:nowrap;transform:scaleX(0.8966);transform-origin:0 0;">$32.90</div>
<div id="t68" style="position:absolute;left:324.45px;top:237.90px;font-family:'Liberation Sans',sans-serif;font-size:14px;line-height:1;font-weight:400;color:#000;white-space:nowrap;transform:scaleX(1.0016);transform-origin:0 0;">Confirmed</div>
<div id="t69" style="position:absolute;left:52.3px;top:263.30px;font-family:'Liberation Sans',sans-serif;font-size:14px;line-height:1;font-weight:400;color:#000;white-space:nowrap;transform:scaleX(0.8886);transform-origin:0 0;">#1060</div>
<div id="t70" style="position:absolute;left:141.64999999999998px;top:263.30px;font-family:'Liberation Sans',sans-serif;font-size:14px;line-height:1;font-weight:400;color:#000;white-space:nowrap;transform:scaleX(0.9664);transform-origin:0 0;">Vests</div>
<div id="t71" style="position:absolute;left:227.4px;top:263.30px;font-family:'Liberation Sans',sans-serif;font-size:14px;line-height:1;font-weight:400;color:#000;white-space:nowrap;transform:scaleX(0.8966);transform-origin:0 0;">$50.90</div>
<div id="t72" style="position:absolute;left:331.5px;top:263.30px;font-family:'Liberation Sans',sans-serif;font-size:14px;line-height:1;font-weight:400;color:#000;white-space:nowrap;transform:scaleX(0.9846);transform-origin:0 0;">Pending</div>
<div id="t73" style="position:absolute;left:52.3px;top:289.10px;font-family:'Liberation Sans',sans-serif;font-size:14px;line-height:1;font-weight:400;color:#000;white-space:nowrap;transform:scaleX(0.8886);transform-origin:0 0;">#1052</div>
<div id="t74" style="position:absolute;left:137.39999999999998px;top:289.10px;font-family:'Liberation Sans',sans-serif;font-size:14px;line-height:1;font-weight:400;color:#000;white-space:nowrap;transform:scaleX(0.9546);transform-origin:0 0;">Gloves</div>
<div id="t75" style="position:absolute;left:227.4px;top:289.10px;font-family:'Liberation Sans',sans-serif;font-size:14px;line-height:1;font-weight:400;color:#000;white-space:nowrap;transform:scaleX(0.8966);transform-origin:0 0;">$19.90</div>
<div id="t76" style="position:absolute;left:328.75px;top:289.10px;font-family:'Liberation Sans',sans-serif;font-size:14px;line-height:1;font-weight:400;color:#3a0000;white-space:nowrap;transform:scaleX(0.9483);transform-origin:0 0;">Canceled</div>
<div id="t77" style="position:absolute;left:52.3px;top:315.00px;font-family:'Liberation Sans',sans-serif;font-size:14px;line-height:1;font-weight:400;color:#000;white-space:nowrap;transform:scaleX(0.8886);transform-origin:0 0;">#1058</div>
<div id="t78" style="position:absolute;left:141.45px;top:315.00px;font-family:'Liberation Sans',sans-serif;font-size:14px;line-height:1;font-weight:400;color:#000;white-space:nowrap;transform:scaleX(0.8787);transform-origin:0 0;">Socks</div>
<div id="t79" style="position:absolute;left:227.4px;top:315.00px;font-family:'Liberation Sans',sans-serif;font-size:14px;line-height:1;font-weight:400;color:#000;white-space:nowrap;transform:scaleX(0.8966);transform-origin:0 0;">$23.90</div>
<div id="t80" style="position:absolute;left:331.5px;top:315.00px;font-family:'Liberation Sans',sans-serif;font-size:14px;line-height:1;font-weight:400;color:#000;white-space:nowrap;transform:scaleX(0.9846);transform-origin:0 0;">Pending</div>
<div id="t81" style="position:absolute;left:52.3px;top:341.00px;font-family:'Liberation Sans',sans-serif;font-size:14px;line-height:1;font-weight:400;color:#000;white-space:nowrap;transform:scaleX(0.8886);transform-origin:0 0;">#1053</div>
<div id="t82" style="position:absolute;left:141.64999999999998px;top:341.00px;font-family:'Liberation Sans',sans-serif;font-size:14px;line-height:1;font-weight:400;color:#000;white-space:nowrap;transform:scaleX(0.9664);transform-origin:0 0;">Vests</div>
<div id="t83" style="position:absolute;left:227.4px;top:341.00px;font-family:'Liberation Sans',sans-serif;font-size:14px;line-height:1;font-weight:400;color:#000;white-space:nowrap;transform:scaleX(0.8966);transform-origin:0 0;">$32.90</div>
<div id="t84" style="position:absolute;left:331.5px;top:341.00px;font-family:'Liberation Sans',sans-serif;font-size:14px;line-height:1;font-weight:400;color:#000;white-space:nowrap;transform:scaleX(0.9846);transform-origin:0 0;">Pending</div>
<div id="t85" style="position:absolute;left:52.3px;top:367.10px;font-family:'Liberation Sans',sans-serif;font-size:14px;line-height:1;font-weight:400;color:#000;white-space:nowrap;transform:scaleX(0.8886);transform-origin:0 0;">#1064</div>
<div id="t86" style="position:absolute;left:141.64999999999998px;top:367.10px;font-family:'Liberation Sans',sans-serif;font-size:14px;line-height:1;font-weight:400;color:#000;white-space:nowrap;transform:scaleX(0.9243);transform-origin:0 0;">Pants</div>
<div id="t87" style="position:absolute;left:227.4px;top:367.10px;font-family:'Liberation Sans',sans-serif;font-size:14px;line-height:1;font-weight:400;color:#000;white-space:nowrap;transform:scaleX(0.8966);transform-origin:0 0;">$45.90</div>
<div id="t88" style="position:absolute;left:324.45px;top:367.10px;font-family:'Liberation Sans',sans-serif;font-size:14px;line-height:1;font-weight:400;color:#000;white-space:nowrap;transform:scaleX(1.0016);transform-origin:0 0;">Confirmed</div>
<div style="position:absolute;left:0px;top:492px;width:843px;height:28px;background:#e6e6e6"></div>
<div style="position:absolute;left:0px;top:492px;width:843px;height:1px;background:#bdbdbd"></div>
<div style="position:absolute;left:99px;top:492px;width:65px;height:25px;background:#fff;border-left:1px solid #a8a8a8;border-right:1px solid #a8a8a8;box-sizing:border-box"></div>
<div style="position:absolute;left:99px;top:514px;width:65px;height:2px;background:#217346"></div>
<div id="t89" style="position:absolute;left:111.2px;top:498.95px;font-family:'Liberation Sans',sans-serif;font-size:13px;line-height:1;font-weight:700;color:#217346;white-space:nowrap;transform:scaleX(0.9381);transform-origin:0 0;">Sheet1</div>
<svg style="position:absolute;left:24px;top:500px;" width="8" height="10" viewBox="0 0 8 10"><path d="M6 1 L2 5 L6 9 Z" fill="#bdbdbd"/></svg>
<svg style="position:absolute;left:52px;top:500px;" width="8" height="10" viewBox="0 0 8 10"><path d="M2 1 L6 5 L2 9 Z" fill="#bdbdbd"/></svg>
<svg style="position:absolute;left:196px;top:498px;" width="18" height="16" viewBox="0 0 18 16"><circle cx="9" cy="8" r="7" fill="none" stroke="#777" stroke-width="1.2"/><path d="M9 4 V12 M5 8 H13" stroke="#777" stroke-width="1.3"/></svg>
<div style="position:absolute;left:438px;top:141px;width:394px;height:319px;background:#f0f0f0;border:1px solid #777;box-sizing:border-box;box-shadow:0 2px 14px rgba(0,0,0,0.35)"></div>
<div style="position:absolute;left:439px;top:142px;width:392px;height:30px;background:#fff"></div>
<div id="t90" style="position:absolute;left:447.5px;top:150.80px;font-family:'Liberation Sans',sans-serif;font-size:12px;line-height:1;font-weight:400;color:#000;white-space:nowrap;transform:scaleX(0.9702);transform-origin:0 0;">Data Validation</div>
<div id="t91" style="position:absolute;left:760.6px;top:149.40px;font-family:'Liberation Sans',sans-serif;font-size:14px;line-height:1;font-weight:400;color:#000;white-space:nowrap;transform:scaleX(0.7182);transform-origin:0 0;-webkit-text-stroke:0.3px #000">?</div>
<svg style="position:absolute;left:802px;top:150px;" width="13" height="13" viewBox="0 0 13 13"><path d="M1.3 1.3 L11.2 11.2 M11.2 1.3 L1.3 11.2" stroke="#000" stroke-width="1.1"/></svg>
<div style="position:absolute;left:445px;top:200px;width:378px;height:220px;background:#fff;border:1px solid #d9d9d9;box-sizing:border-box"></div>
<div style="position:absolute;left:506px;top:181px;width:92px;height:20px;background:#f0f0f0;border:1px solid #d9d9d9;border-bottom:none;box-sizing:border-box"></div>
<div style="position:absolute;left:598px;top:181px;width:69px;height:20px;background:#f0f0f0;border:1px solid #d9d9d9;border-bottom:none;box-sizing:border-box"></div>
<div style="position:absolute;left:445px;top:179px;width:62px;height:22px;background:#fff;border:1px solid #d9d9d9;border-bottom:none;box-sizing:border-box"></div>
<div style="position:absolute;left:449px;top:183px;width:53px;height:16px;border:1px dotted #000;box-sizing:border-box"></div>
<div id="t92" style="position:absolute;left:454.4px;top:185.60px;font-family:'Liberation Sans',sans-serif;font-size:12px;line-height:1;font-weight:400;color:#000;white-space:nowrap;transform:scaleX(0.9456);transform-origin:0 0;">Settings</div>
<div id="t93" style="position:absolute;left:514px;top:185.80px;font-family:'Liberation Sans',sans-serif;font-size:12px;line-height:1;font-weight:400;color:#000;white-space:nowrap;transform:scaleX(0.9604);transform-origin:0 0;">Input Message</div>
<div id="t94" style="position:absolute;left:607.4px;top:185.80px;font-family:'Liberation Sans',sans-serif;font-size:12px;line-height:1;font-weight:400;color:#000;white-space:nowrap;transform:scaleX(0.9460);transform-origin:0 0;">Error Alert</div>
<div id="t95" style="position:absolute;left:454.4px;top:211.00px;font-family:'Liberation Sans',sans-serif;font-size:12px;line-height:1;font-weight:400;color:#000;white-space:nowrap;transform:scaleX(0.9851);transform-origin:0 0;">Validation criteria</div>
<div style="position:absolute;left:550px;top:216px;width:266px;height:1px;background:#dcdcdc"></div>
<div id="t96" style="position:absolute;left:463px;top:230.90px;font-family:'Liberation Sans',sans-serif;font-size:12px;line-height:1;font-weight:400;color:#000;white-space:nowrap;transform:scaleX(0.9865);transform-origin:0 0;"><u>A</u>llow:</div>
<div style="position:absolute;left:463px;top:246px;width:156px;height:22px;background:#fff;border:2px solid #b9b9b9;box-sizing:border-box"></div>
<div style="position:absolute;left:601px;top:248px;width:16px;height:18px;background:#e3e3e3;border-left:1px solid #b9b9b9;box-sizing:border-box"></div>
<svg style="position:absolute;left:604px;top:253px;" width="10" height="7" viewBox="0 0 10 7"><path d="M1 1.5 L5 5.5 L9 1.5" fill="none" stroke="#505050" stroke-width="1.1"/></svg>
<div id="t97" style="position:absolute;left:467px;top:250.80px;font-family:'Liberation Sans',sans-serif;font-size:12px;line-height:1;font-weight:400;color:#000;white-space:nowrap;transform:scaleX(0.8829);transform-origin:0 0;">List</div>
<div id="t98" style="position:absolute;left:463px;top:271.80px;font-family:'Liberation Sans',sans-serif;font-size:12px;line-height:1;font-weight:400;color:#6d6d6d;white-space:nowrap;transform:scaleX(0.9063);transform-origin:0 0;">Data:</div>
<div style="position:absolute;left:463px;top:287px;width:156px;height:22px;background:#f0f0f0;border:2px solid #c4c4c4;box-sizing:border-box"></div>
<div style="position:absolute;left:601px;top:289px;width:16px;height:18px;background:#e3e3e3;border-left:1px solid #c4c4c4;box-sizing:border-box"></div>
<svg style="position:absolute;left:604px;top:294px;" width="10" height="7" viewBox="0 0 10 7"><path d="M1 1.5 L5 5.5 L9 1.5" fill="none" stroke="#505050" stroke-width="1.1"/></svg>
<div id="t99" style="position:absolute;left:467.3px;top:291.80px;font-family:'Liberation Sans',sans-serif;font-size:12px;line-height:1;font-weight:400;color:#6d6d6d;white-space:nowrap;transform:scaleX(0.9763);transform-origin:0 0;">between</div>
<div style="position:absolute;left:628px;top:247px;width:13px;height:13px;background:#fff;border:1px solid #333;box-sizing:border-box"></div>
<svg style="position:absolute;left:628px;top:247px;" width="13" height="13" viewBox="0 0 13 13"><path d="M2.5 6.3 L5.2 9.3 L10.5 3.3" fill="none" stroke="#222" stroke-width="1.5"/></svg>
<div style="position:absolute;left:628px;top:266px;width:13px;height:13px;background:#fff;border:1px solid #333;box-sizing:border-box"></div>
<svg style="position:absolute;left:628px;top:266px;" width="13" height="13" viewBox="0 0 13 13"><path d="M2.5 6.3 L5.2 9.3 L10.5 3.3" fill="none" stroke="#222" stroke-width="1.5"/></svg>
<div id="t100" style="position:absolute;left:645.7px;top:247.60px;font-family:'Liberation Sans',sans-serif;font-size:12px;line-height:1;font-weight:400;color:#000;white-space:nowrap;transform:scaleX(0.9809);transform-origin:0 0;">Ignore <u>b</u>lank</div>
<div id="t101" style="position:absolute;left:645.7px;top:267.00px;font-family:'Liberation Sans',sans-serif;font-size:12px;line-height:1;font-weight:400;color:#000;white-space:nowrap;transform:scaleX(1.0004);transform-origin:0 0;"><u>I</u>n-cell dropdown</div>
<div id="t102" style="position:absolute;left:463.5px;top:313.30px;font-family:'Liberation Sans',sans-serif;font-size:12px;line-height:1;font-weight:400;color:#000;white-space:nowrap;transform:scaleX(0.9063);transform-origin:0 0;"><u>S</u>ource:</div>
<div style="position:absolute;left:463px;top:328px;width:274px;height:20px;background:#fff;border:1px solid #adadad;box-sizing:border-box"></div>
<div style="position:absolute;left:715px;top:328px;width:22px;height:20px;background:#e1e1e1;border:2px solid #b4b4b4;box-shadow:inset 0 0 0 1px #fff;box-sizing:border-box"></div>
<svg style="position:absolute;left:719px;top:332px;" width="13" height="13" viewBox="0 0 13 13"><path d="M6.5 1.5 L2.5 6 H5 V9.5 H8 V6 H10.5 Z" fill="#000"/><path d="M2 11.5 H11" stroke="#000" stroke-width="1.2"/></svg>
<div id="t103" style="position:absolute;left:467px;top:332.80px;font-family:'Liberation Sans',sans-serif;font-size:12px;line-height:1;font-weight:400;color:#000;white-space:nowrap;transform:scaleX(0.9520);transform-origin:0 0;">Pending, Confirmed, Canceled</div>
<div style="position:absolute;left:454px;top:396px;width:13px;height:13px;background:#fff;border:1px solid #333;box-sizing:border-box"></div>
<div id="t104" style="position:absolute;left:471px;top:397.30px;font-family:'Liberation Sans',sans-serif;font-size:12px;line-height:1;font-weight:400;color:#000;white-space:nowrap;transform:scaleX(0.9681);transform-origin:0 0;">Ap<u>p</u>ly these changes to all other cells with the same settings</div>
<div style="position:absolute;left:445px;top:429px;width:74px;height:22px;background:#e1e1e1;border:1px solid #adadad;box-sizing:border-box"></div>
<div id="t105" style="position:absolute;left:460.5px;top:434.30px;font-family:'Liberation Sans',sans-serif;font-size:12px;line-height:1;font-weight:400;color:#000;white-space:nowrap;transform:scaleX(0.9507);transform-origin:0 0;"><u>C</u>lear All</div>
<div style="position:absolute;left:666px;top:429px;width:74px;height:22px;background:#e1e1e1;border:2px solid #0078d7;box-sizing:border-box"></div>
<div id="t106" style="position:absolute;left:695.4px;top:434.30px;font-family:'Liberation Sans',sans-serif;font-size:12px;line-height:1;font-weight:400;color:#000;white-space:nowrap;transform:scaleX(0.8591);transform-origin:0 0;">OK</div>
<div style="position:absolute;left:750px;top:429px;width:74px;height:22px;background:#e1e1e1;border:1px solid #adadad;box-sizing:border-box"></div>
<div id="t107" style="position:absolute;left:770.5px;top:434.30px;font-family:'Liberation Sans',sans-serif;font-size:12px;line-height:1;font-weight:400;color:#000;white-space:nowrap;transform:scaleX(0.8887);transform-origin:0 0;">Cancel</div>
<svg style="position:absolute;left:0;top:0" width="843" height="520"><path d="M562.2 390.8 L520.6 427.3 L524.6 430.2 L509 434.2 L516.1 420.4 L518.5 424.6 Z" fill="#f20000"/></svg>
</body></html>
